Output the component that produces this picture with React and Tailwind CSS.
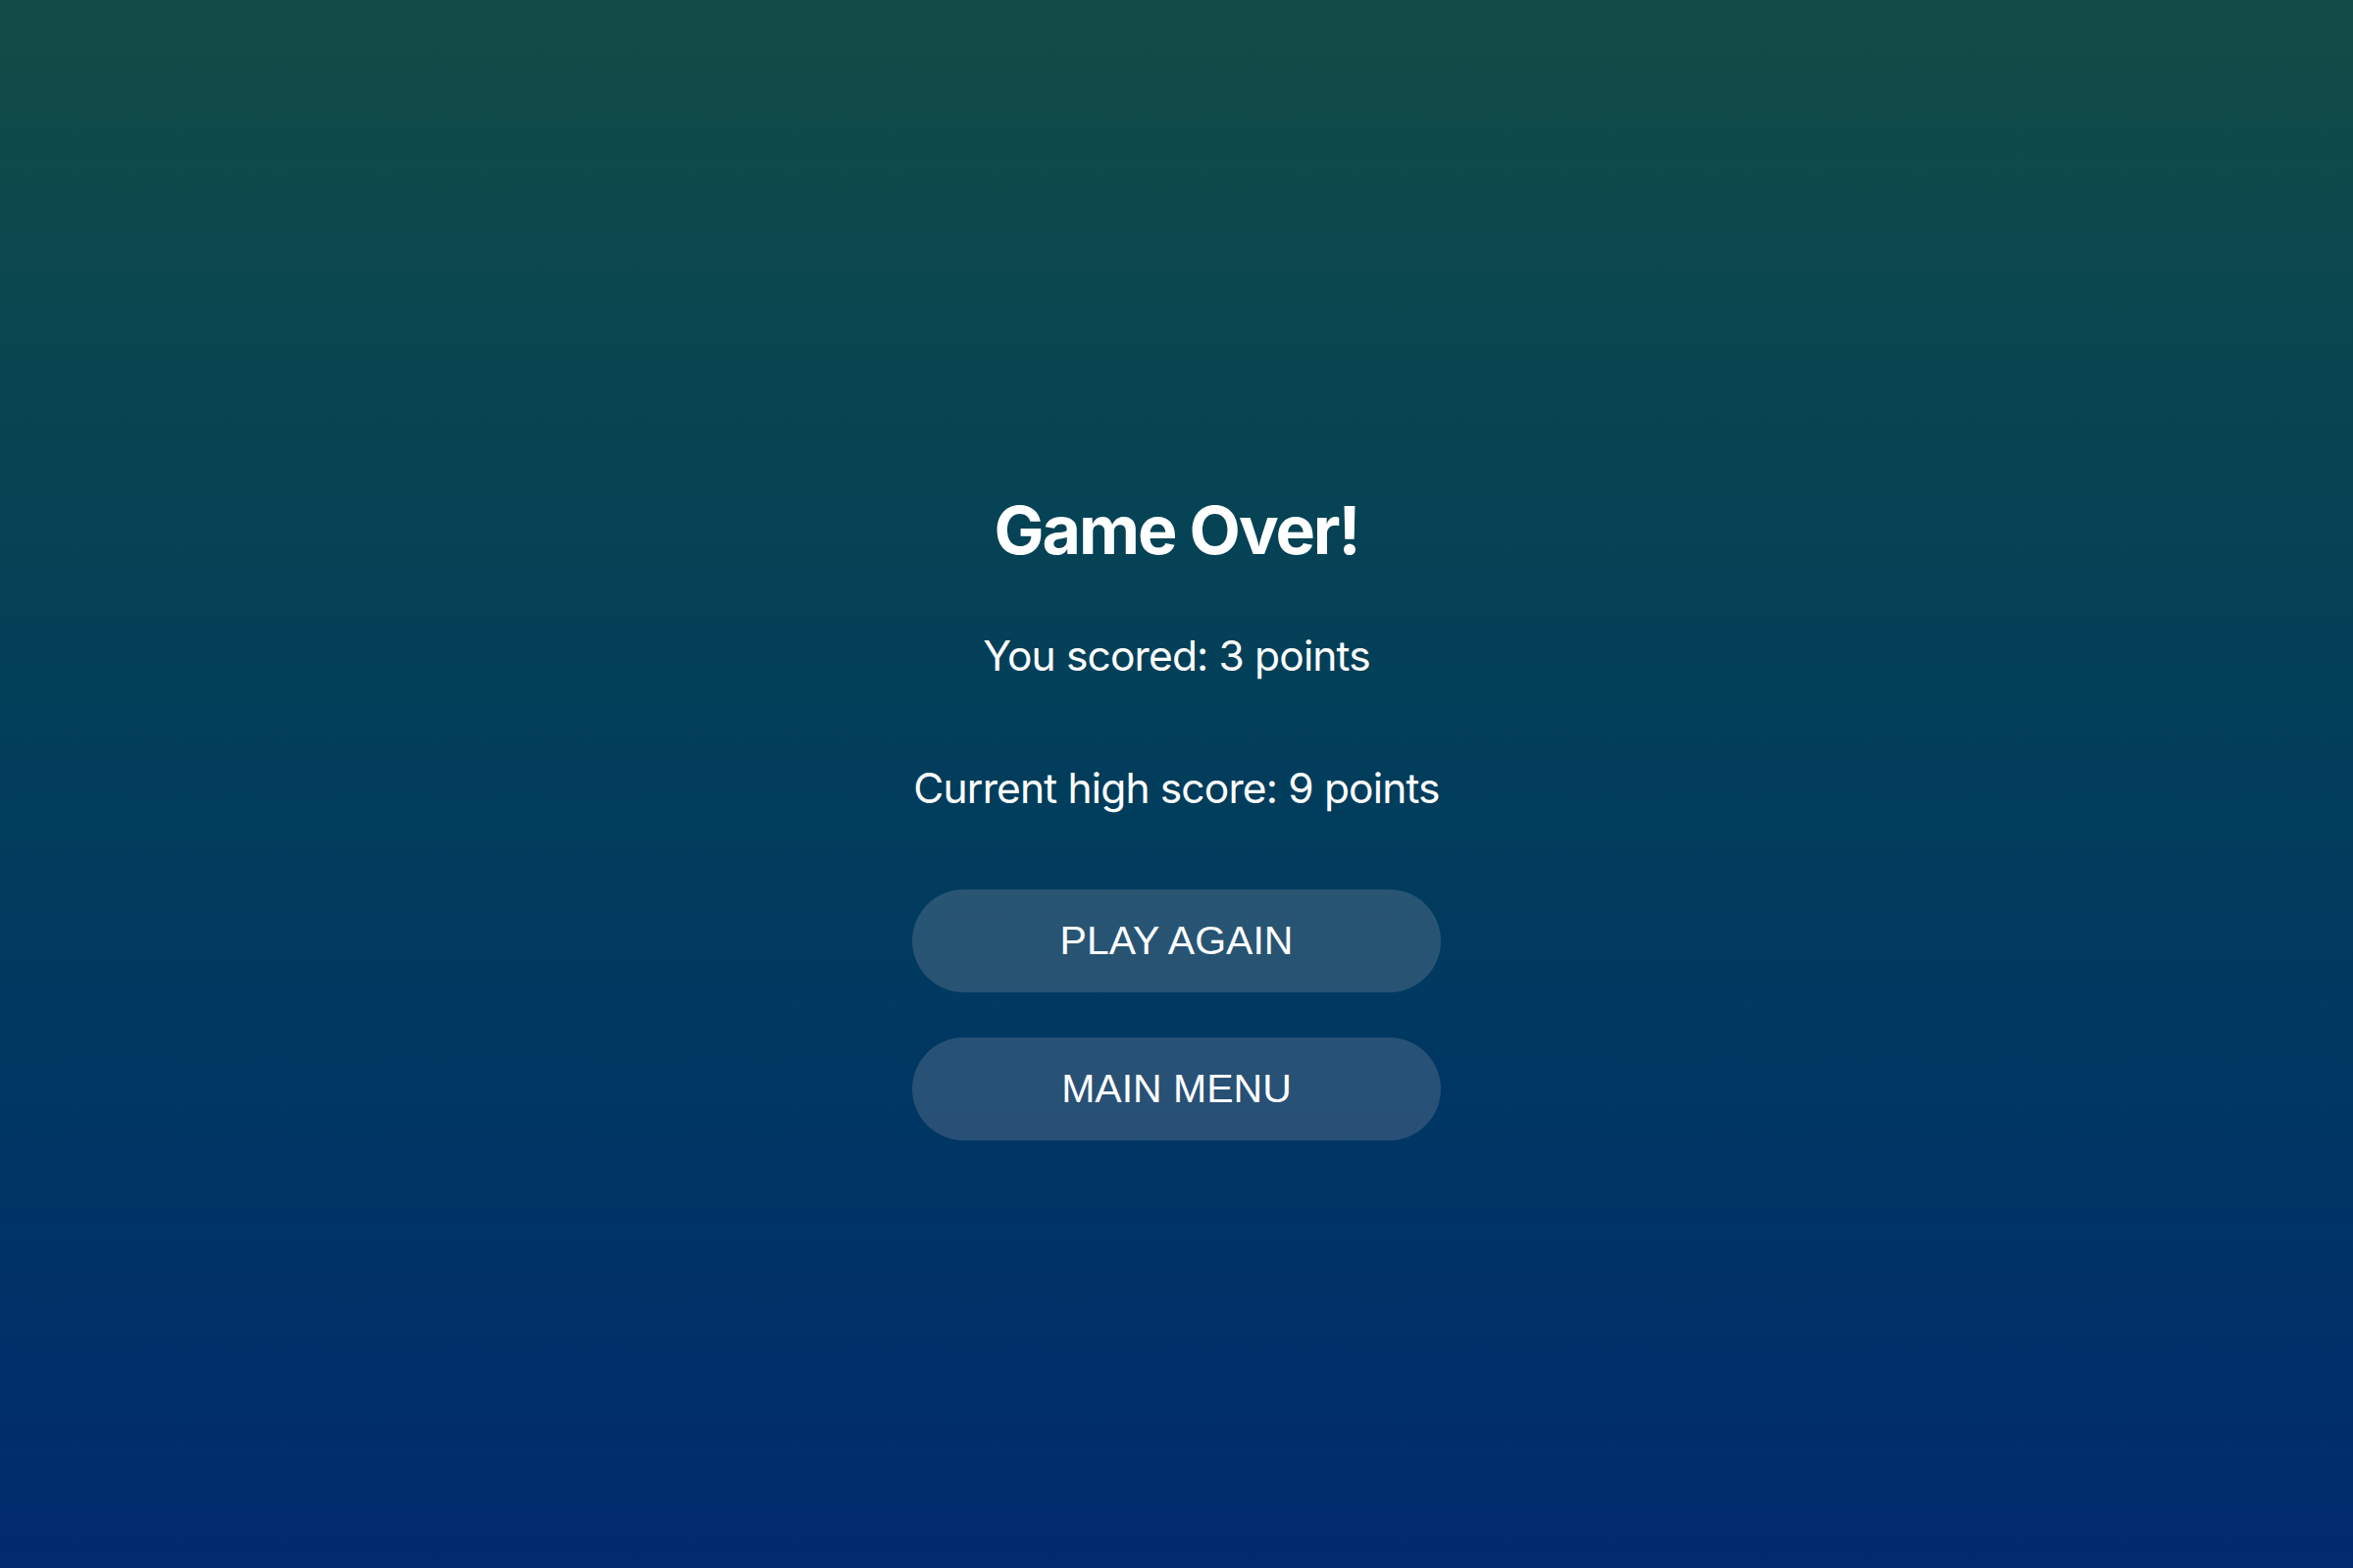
export default function App() {
  return (
    <div className="min-h-screen w-full bg-gradient-to-b from-[#124c46] to-[#022a6e] flex flex-col items-center justify-center text-white font-['Inter',sans-serif] pt-[70px]">
      <h1 className="text-[68px] font-bold tracking-[-0.03em] leading-none">Game Over!</h1>
      <p className="mt-[74px] text-[42.5px] tracking-[-0.02em] leading-none">You scored: 3 points</p>
      <p className="mt-[92px] text-[42.5px] tracking-[-0.02em] leading-none">Current high score: 9 points</p>
      <div className="mt-[82px] flex flex-col gap-[46px]">
        <button className="w-[539px] h-[105px] rounded-full bg-[#f0d8d8]/[0.17] text-[41px] font-['Liberation_Sans',Arial,sans-serif] uppercase">Play Again</button>
        <button className="w-[539px] h-[105px] rounded-full bg-[#f0d8d8]/[0.17] text-[41px] font-['Liberation_Sans',Arial,sans-serif] uppercase">Main Menu</button>
      </div>
    </div>
  );
}
